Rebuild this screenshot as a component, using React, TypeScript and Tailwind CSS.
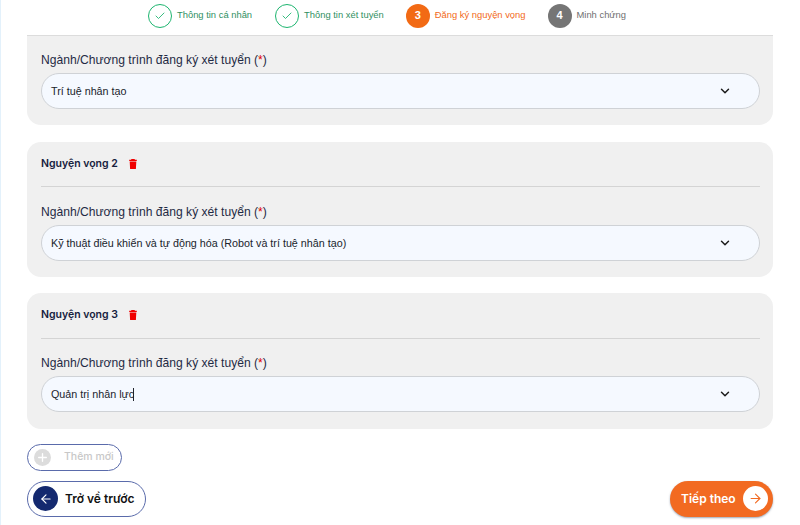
import { ArrowLeft, ArrowRight, Check, ChevronDown, Plus } from "lucide-react";

const arial = "font-['Liberation_Sans',Arial,sans-serif]";
const inter = "font-['Inter',sans-serif]";

const Trash = () => (
  <svg width="8" height="10" viewBox="0 0 8 10" className="text-[#f00000]" fill="currentColor">
    <path d="M2.500 0h3L6 .8h1.800v1.200H.2V.8h1.800zM.7 2.500h6.600l-.4 7.500H1.100z" />
  </svg>
);

const Step = ({ done, n, label, color, bg }: { done?: boolean; n?: number; label: string; color: string; bg?: string }) => (
  <div className="flex items-center gap-[5px]">
    {done ? (
      <div className="w-6 h-6 rounded-full border-[1.5px] border-[#1db56f] flex items-center justify-center">
        <Check size={12} strokeWidth={1.75} className="text-[#1db56f]" />
      </div>
    ) : (
      <div
        className="w-6 h-6 rounded-full flex items-center justify-center text-white text-[11px] font-bold"
        style={{ background: bg }}
      >
        {n}
      </div>
    )}
    <span className="text-[9.4px]" style={{ color }}>{label}</span>
  </div>
);

const Select = ({ value, caret }: { value: string; caret?: boolean }) => (
  <div className="h-9 rounded-[18px] border border-[#cfd2d6] bg-[#f5f9ff] pl-[9px] pr-[27px] flex items-center justify-between">
    <span className="text-[10.75px] text-[#20242c] flex items-center">
      {value}
      {caret && <span className="w-px h-[13px] bg-[#20242c] -ml-[1px]" />}
    </span>
    <ChevronDown size={14} strokeWidth={2.5} className="text-[#1b1b1b]" />
  </div>
);

const Field = ({ value, caret }: { value: string; caret?: boolean }) => (
  <div>
    <div className="text-[12.1px] leading-[15px] text-[#1f2a44] mb-[5px]">
      Ngành/Chương trình đăng ký xét tuyển (<span className="text-[#e00000]">*</span>)
    </div>
    <Select value={value} caret={caret} />
  </div>
);

const Wish = ({ n, value, caret }: { n: number; value: string; caret?: boolean }) => (
  <div className="rounded-[14px] bg-[#f0f0f0] pl-[14px] pr-[13px] pt-[14px] pb-[16.5px]">
    <div className="flex items-center gap-[11px] h-[15.4px]">
      <span className={`${inter} text-[10.5px] font-semibold text-[#16213e]`}>Nguyện vọng {n}</span>
      <Trash />
    </div>
    <div className="h-px bg-[#d4d4d4] mt-[15px] mb-[17.4px]" />
    <Field value={value} caret={caret} />
  </div>
);

export default function App() {
  return (
    <div className={`${arial} w-[800px] h-[525px] overflow-hidden bg-white border-l border-[#e3f1fb] flex flex-col`}>
      <div className="h-[35px] shrink-0 flex items-center pl-[147px] pb-[4px]">
        <Step done label="Thông tin cá nhân" color="#2f8f5f" />
        <div className="w-[23px]" />
        <Step done label="Thông tin xét tuyển" color="#2f8f5f" />
        <div className="w-[22px]" />
        <Step n={3} label="Đăng ký nguyện vọng" color="#f26a21" bg="#f26a14" />
        <div className="w-[22px]" />
        <Step n={4} label="Minh chứng" color="#6f6f6f" bg="#757575" />
      </div>

      <div className="pl-[26px] pr-[27px] flex flex-col">
        <div className="rounded-b-[14px] bg-[#f0f0f0] border-t border-[#dcdcdc] pl-[14px] pr-[13px] pt-[17px] pb-4">
          <Field value="Trí tuệ nhân tạo" />
        </div>
        <div className="flex flex-col gap-4 mt-[17px]">
          <Wish n={2} value="Kỹ thuật điều khiển và tự động hóa (Robot và trí tuệ nhân tạo)" />
          <Wish n={3} value="Quản trị nhân lực" caret />
        </div>

        <div className={`${inter} mt-[15px] w-[95px] h-[27px] rounded-full border border-[#5a6bab] flex items-center pl-[6px]`}>
          <div className="w-[17px] h-[17px] rounded-full bg-[#dcdcdc] flex items-center justify-center">
            <Plus size={13} strokeWidth={2.5} className="text-white" />
          </div>
          <span className="ml-[13px] text-[10.5px] font-medium text-[#c8c8c8]">Thêm mới</span>
        </div>

        <div className={`${inter} mt-[10px] flex items-center justify-between`}>
          <div className="w-[119px] h-9 rounded-full border border-[#5a6bab] flex items-center pl-[5px] gap-[7px]">
            <div className="w-[25px] h-[25px] rounded-full bg-[#14296f] flex items-center justify-center">
              <ArrowLeft size={14} strokeWidth={2} className="text-white" />
            </div>
            <span className="text-xs font-semibold text-[#111]">Trở về trước</span>
          </div>
          <div className="w-[103px] h-9 rounded-full bg-[#f26a21] shadow-[0_1px_2px_rgba(60,80,110,0.5)] flex items-center justify-between pl-[11px] pr-[5px]">
            <span className="text-xs font-semibold text-white">Tiếp theo</span>
            <div className="w-[25px] h-[25px] rounded-full bg-white flex items-center justify-center">
              <ArrowRight size={15} strokeWidth={1.75} className="text-[#f26a21]" />
            </div>
          </div>
        </div>
      </div>
    </div>
  );
}
